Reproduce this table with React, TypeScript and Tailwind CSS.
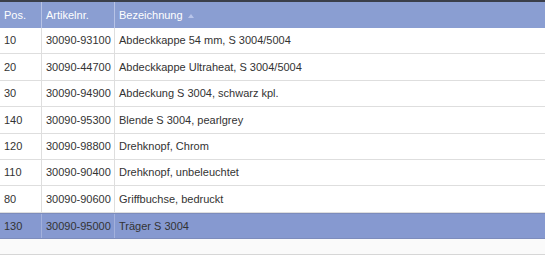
const rows = [
  { pos: "10", nr: "30090-93100", text: "Abdeckkappe 54 mm, S 3004/5004" },
  { pos: "20", nr: "30090-44700", text: "Abdeckkappe Ultraheat, S 3004/5004" },
  { pos: "30", nr: "30090-94900", text: "Abdeckung S 3004, schwarz kpl." },
  { pos: "140", nr: "30090-95300", text: "Blende S 3004, pearlgrey" },
  { pos: "120", nr: "30090-98800", text: "Drehknopf, Chrom" },
  { pos: "110", nr: "30090-90400", text: "Drehknopf, unbeleuchtet" },
  { pos: "80", nr: "30090-90600", text: "Griffbuchse, bedruckt" },
  { pos: "130", nr: "30090-95000", text: "Träger S 3004" },
];

const selected = "130";

export default function App() {
  return (
    <div className="w-[545px] h-[258px] overflow-hidden bg-white font-['Liberation_Sans',Arial,sans-serif] text-[11px] text-[#333] whitespace-nowrap">
      <div className="h-[2px] bg-[#3a3f4a]" />
      <div className="flex h-[26px] bg-[#8a9ed2] text-white">
        <div className="w-[42px] shrink-0 flex items-center pl-[4px] border-r border-[#b7c3e6]">Pos.</div>
        <div className="w-[73px] shrink-0 flex items-center pl-[4px] border-r border-[#b7c3e6]">Artikelnr.</div>
        <div className="flex-1 flex items-center pl-[4px] gap-[5px]">
          Bezeichnung
          <svg width="6" height="4" viewBox="0 0 6 4" className="mt-[1px]">
            <path d="M0 4 L3 0 L6 4 Z" fill="#b9c5ea" />
          </svg>
        </div>
      </div>
      {rows.map((r) => {
        const sel = r.pos === selected;
        return (
          <div
            key={r.pos}
            className={`flex h-[26.4px] border-b ${
              sel ? "bg-[#8699d0] border-[#7d8cbc] border-t" : "border-[#dedede]"
            }`}
          >
            <div className={`w-[42px] shrink-0 flex items-center pl-[4px] border-r ${sel ? "border-[#a3b1dc]" : "border-[#dedede]"}`}>
              {r.pos}
            </div>
            <div className={`w-[73px] shrink-0 flex items-center pl-[4px] border-r ${sel ? "border-[#a3b1dc]" : "border-[#dedede]"}`}>
              {r.nr}
            </div>
            <div className="flex-1 flex items-center pl-[4px]">{r.text}</div>
          </div>
        );
      })}
      <div className="h-[16px] bg-[#fafafa] border-b border-[#d6d6d6]" />
    </div>
  );
}
